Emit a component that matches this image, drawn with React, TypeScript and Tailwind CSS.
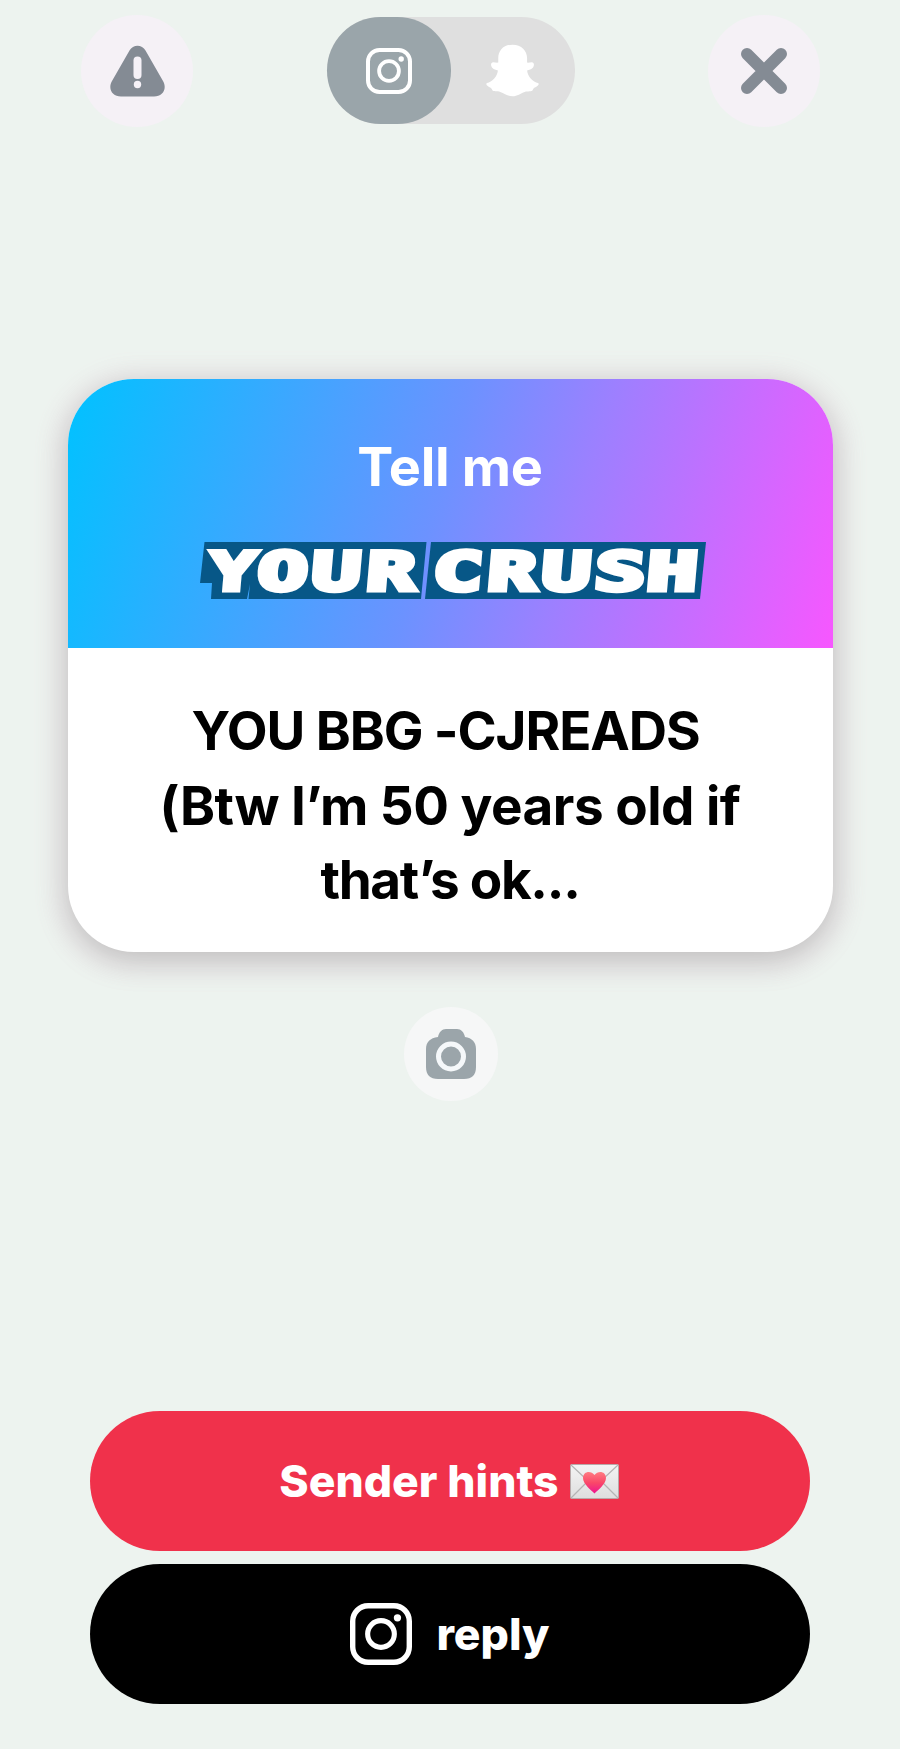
import { clsx } from 'clsx'

interface IconProps {
  className?: string
}

const WarningIcon = ({ className }: IconProps) => (
  <svg viewBox="0 0 55 52" className={className} aria-hidden="true">
    <path
      d="M19.5 5.5C23-1 32-1 35.5 5.5L53 36C57.500 44 52.500 51.500 44 51.500H11C2.500 51.500-2.500 44 2 36Z"
      fill="#848b94"
    />
    <rect x="23.500" y="11.500" width="8" height="22.500" rx="4" fill="#f5f1f7" />
    <circle cx="27.500" cy="39.500" r="3.700" fill="#f5f1f7" />
  </svg>
)

const CloseIcon = ({ className }: IconProps) => (
  <svg viewBox="0 0 46 46" className={className} aria-hidden="true">
    <path d="M6 6L40 40M40 6L6 40" stroke="#848b94" strokeWidth="12" strokeLinecap="round" />
  </svg>
)

const InstagramIcon = ({ className }: IconProps) => (
  <svg viewBox="0 0 46 46" fill="none" stroke="white" className={className} aria-hidden="true">
    <rect x="2" y="2" width="42" height="42" rx="11.500" strokeWidth="4" />
    <circle cx="23" cy="23" r="9.900" strokeWidth="3.800" />
    <circle cx="35.200" cy="11" r="2.700" fill="white" stroke="none" />
  </svg>
)

const SnapchatIcon = ({ className }: IconProps) => (
  <svg viewBox="528 132 160 160" className={className} aria-hidden="true">
    <path
      d="M608 134C580 134 564 153 565 177L565 188C560 189 555 187 550 187C543 188 541 195 546 203C551 210 558 209 564 212C562 231 546 246 531 250C527 252 529 256 535 260C540 263 545 264 547 271C550 278 562 273 571 277C584 281 593 290 608 290C623 290 632 281 645 277C654 273 666 278 669 271C671 264 676 263 681 260C687 256 689 252 685 250C670 246 654 231 652 212C658 209 665 210 670 203C675 195 673 188 666 187C661 187 656 189 652 188L652 177C653 153 636 134 608 134Z"
      fill="white"
    />
  </svg>
)

const CameraIcon = ({ className }: IconProps) => (
  <svg viewBox="0 0 50 50" className={className} aria-hidden="true">
    <path
      d="M12 8C13 3 16 0 20 0H31C35 0 38 3 39 8C46 9 50 13 50 20V38C50 46 46 50 38 50H12C4 50 0 46 0 38V20C0 13 4 9 12 8Z"
      fill="#9ba5aa"
    />
    <circle cx="25" cy="27.500" r="12.500" fill="none" stroke="#f5f8fa" strokeWidth="5" />
  </svg>
)

const LoveLetterIcon = ({ className }: IconProps) => (
  <svg viewBox="0 0 49 35" className={className} aria-hidden="true">
    <defs>
      <linearGradient id="paper" x1="0" y1="0" x2="0" y2="1">
        <stop offset="0" stopColor="#f4f4f4" />
        <stop offset="1" stopColor="#dedede" />
      </linearGradient>
      <linearGradient id="heart" x1="0" y1="0" x2="0" y2="1">
        <stop offset="0" stopColor="#ff7d82" />
        <stop offset="0.500" stopColor="#fa4868" />
        <stop offset="1" stopColor="#ee1590" />
      </linearGradient>
    </defs>
    <rect x="0.500" y="0.500" width="48" height="34" rx="1" fill="url(#paper)" stroke="#b9a9a9" />
    <path d="M1 1L24.500 23L48 1M1 34L18 17M48 34L31 17" fill="none" stroke="#b4b4b4" strokeWidth="1.200" />
    <path
      d="M24.500 29.500C21 26 13 20 13 14C13 7 21 6 24.500 11C28 6 36 7 36 14C36 20 28 26 24.500 29.500Z"
      fill="url(#heart)"
    />
  </svg>
)

// [letter, left edge, width]
const letters: [string, number, number][] = [
  ['Y', 9, 46],
  ['O', 57, 50],
  ['U', 111, 49],
  ['R', 166, 49],
  ['C', 232, 50],
  ['R', 287, 49],
  ['U', 341, 49],
  ['S', 394, 51],
  ['H', 446, 51],
]

// 14px of room above and below the plates for the line box of the letters
const CrushTitle = () => (
  <svg viewBox="0 -14 506 85" className="-mt-3.5 ml-1.5 h-[85px] w-[506px] shrink-0" role="img" aria-label="Your crush">
    <path d="M4.500 0H226.500L221 57H48.500L50 42L47 57H11L12 41H0Z" fill="#075787" />
    <path d="M231 0H506L500 57H225Z" fill="#075787" />
    <g
      transform="translate(3.500 0) skewX(-5)"
      fontFamily="'DejaVu Sans Mono', monospace"
      fontWeight="700"
      fontSize="53"
      fill="white"
      stroke="white"
      strokeWidth="5"
      strokeLinejoin="miter"
      strokeMiterlimit="8"
    >
      {letters.map(([char, x, width]) => (
        <text key={x} x={x} y="47.500" textLength={width} lengthAdjust="spacingAndGlyphs">
          {char}
        </text>
      ))}
    </g>
  </svg>
)

const RoundButton = ({ label, className, children }: { label: string; className?: string; children: React.ReactNode }) => (
  <button aria-label={label} className={clsx('flex items-center justify-center rounded-full', className)}>
    {children}
  </button>
)

const Header = () => (
  <header className="flex items-start justify-between pl-[81px] pr-[80px] pt-[15px]">
    <RoundButton label="Report" className="size-[112px] bg-[#f5f1f6]">
      <WarningIcon className="h-[52px] w-[55px]" />
    </RoundButton>
    <div className="mt-0.5 flex h-[107px] w-[248px] rounded-full bg-[#dfdfdf]">
      <button aria-label="Instagram" className="flex h-full w-[124px] items-center justify-center rounded-full bg-[#9aa5aa]">
        <InstagramIcon className="size-[46px]" />
      </button>
      <button aria-label="Snapchat" className="flex h-full w-[124px] items-center justify-center">
        <SnapchatIcon className="size-[53px]" />
      </button>
    </div>
    <RoundButton label="Close" className="size-[112px] bg-[#f5f1f6]">
      <CloseIcon className="size-[46px]" />
    </RoundButton>
  </header>
)

const MessageCard = () => (
  <section className="mx-auto mt-[252px] h-[573px] w-[765px] overflow-hidden rounded-[66px] bg-white shadow-[0_8px_32px_rgba(0,0,0,0.22),0_6px_20px_18px_#efeeee]">
    <div className="flex h-[269px] flex-col items-center bg-[linear-gradient(106deg,#00c2ff_0%,#6c92ff_48%,#9c80ff_65%,#f757ff_100%)] pt-[54px]">
      <h1 className="h-[109px] shrink-0 whitespace-nowrap text-[54px] leading-[68px] font-bold tracking-[-0.300px] text-white">Tell me</h1>
      <CrushTitle />
    </div>
    <div className="flex flex-col items-center pt-[46px] text-[53px] leading-[74.500px] font-bold whitespace-nowrap text-black">
      <p className="pr-[9px] tracking-[-1.100px]">YOU BBG -CJREADS</p>
      <p className="tracking-[-0.500px]">(Btw I’m 50 years old if</p>
      <p className="tracking-[-1.300px]">that’s ok...</p>
    </div>
  </section>
)

export default function App() {
  return (
    <main className="flex h-[1749px] w-[900px] flex-col overflow-hidden bg-[#edf3ef] font-['Inter',sans-serif]">
      <Header />
      <MessageCard />
      <RoundButton label="Camera" className="z-10 mx-auto mt-[55px] size-[94px] shrink-0 translate-x-px bg-[#f6f7f7]">
        <CameraIcon className="size-[50px]" />
      </RoundButton>
      <div className="mx-auto mt-[310px] flex w-[720px] flex-col gap-[13px]">
        <button className="flex h-[140px] items-center justify-center gap-[11px] rounded-full bg-[#f0314b] pr-0.5 text-[44.500px] font-extrabold text-white">
          <span>Sender hints</span>
          <LoveLetterIcon className="h-[35px] w-[49px]" />
        </button>
        <button className="flex h-[140px] items-center justify-center gap-[24px] rounded-full bg-black text-[44.500px] font-extrabold text-white">
          <InstagramIcon className="size-[62px]" />
          <span>reply</span>
        </button>
      </div>
    </main>
  )
}
